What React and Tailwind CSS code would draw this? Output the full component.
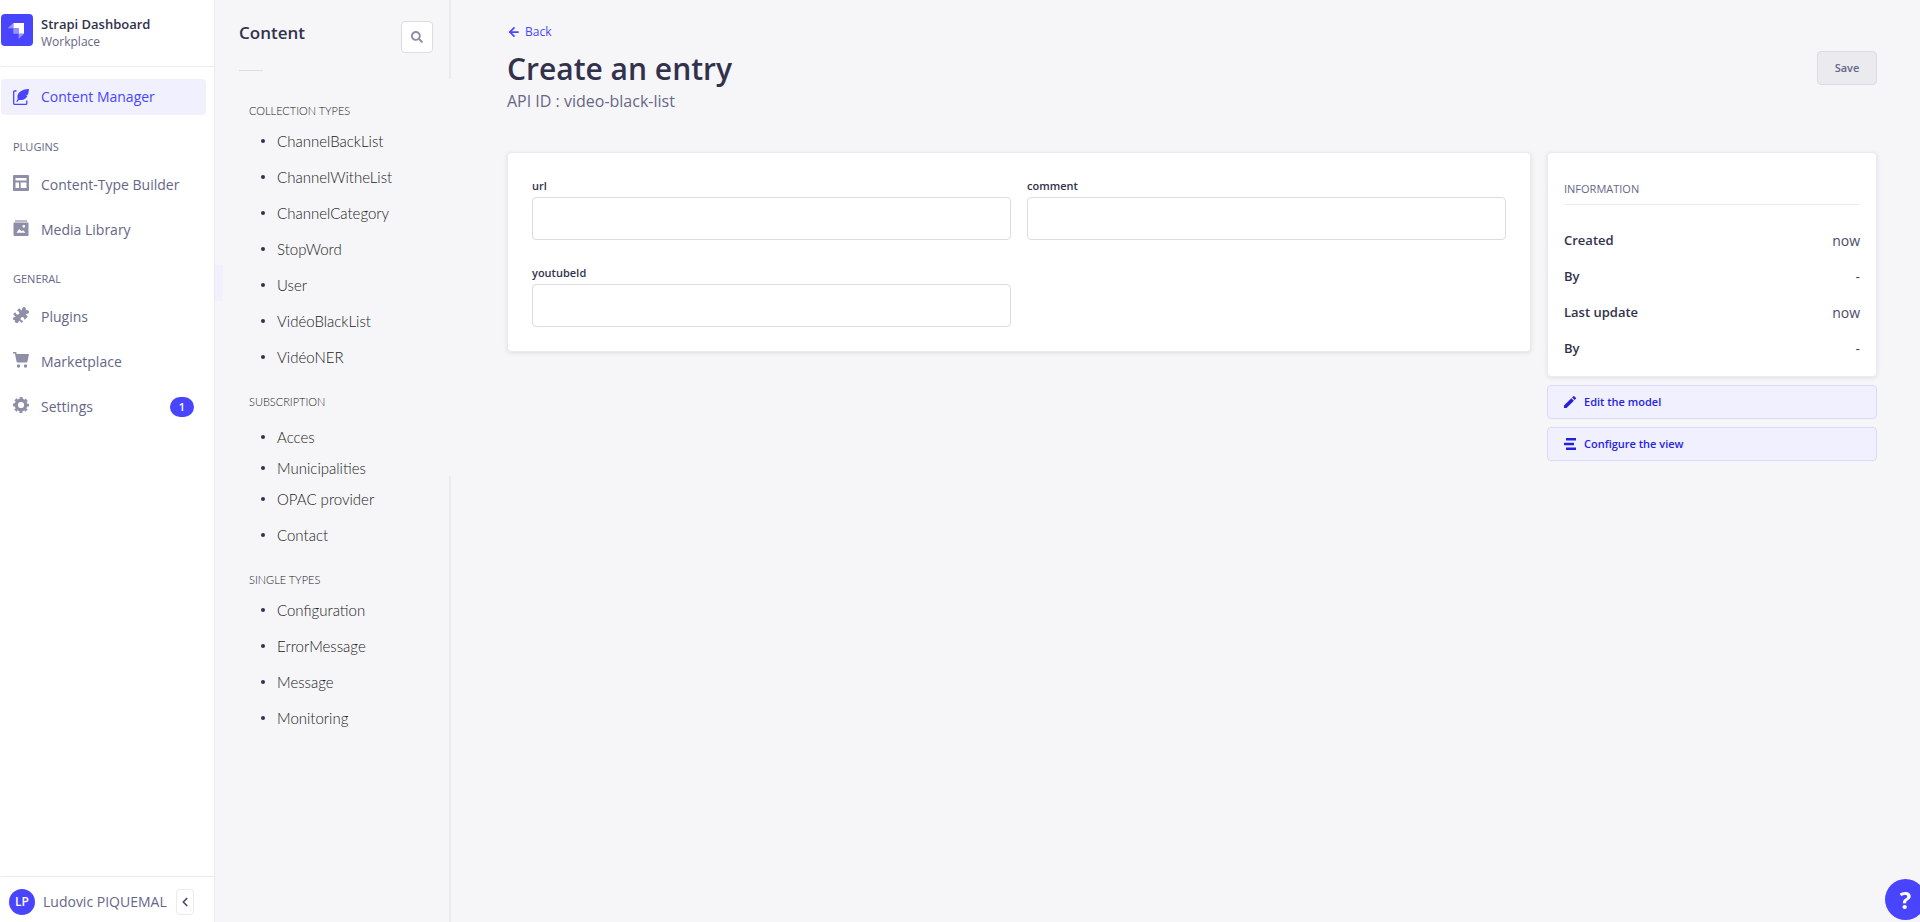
import { useState } from 'react';
import { FaSearch } from 'react-icons/fa';
import { MdEdit } from 'react-icons/md';
import { FiArrowLeft, FiChevronLeft } from 'react-icons/fi';

const StrapiLogo = () => (
  <svg viewBox="0 0 32 32" className="w-8 h-8 shrink-0" aria-hidden="true">
    <rect width="32" height="32" rx="4" fill="#4945ff" />
    <path d="M12.3 9H23v10.7h-5.4v-5a.5.5 0 0 0-.5-.5h-4.8z" fill="#fff" />
    <path d="M12.3 9v5.2H7.2a.2.2 0 0 1-.2-.4z" fill="#9593ff" />
    <path d="M12.3 14.2h4.8a.5.5 0 0 1 .5.5v5h-4.8a.5.5 0 0 1-.5-.5z" fill="#9593ff" />
    <path d="M17.6 19.7H23l-5 5a.2.2 0 0 1-.4-.2z" fill="#9593ff" />
  </svg>
);

const FeatherIcon = () => (
  <svg viewBox="0 0 16 16" className="w-4 h-4 shrink-0" aria-hidden="true">
    <path d="M3.500 2H1.300Q.7 2 .7 2.600v12q0 .7.7.7h11.800q.6 0 .6-.7v-3.200" fill="none" stroke="#4945ff" strokeWidth="1.300" />
    <path d="M16 0C12.500 0 7.500 1.200 5.300 4.600c-1.200 1.900-1 3.700-.6 5.400L3.200 12.700l1 .4 1.600-2.100c3 .4 5.700-.2 7.500-2.300.5-.6.8-1.200 1.100-1.900l-1.500-.1 2-1.100c.6-1.700.9-3.600 1.100-5.600z" fill="#4945ff" />
  </svg>
);

const LayoutIcon = () => (
  <svg viewBox="0 0 16 16" className="w-4 h-4 shrink-0" fill="#8e8ea9" aria-hidden="true">
    <path fillRule="evenodd" d="M1 0h14a1 1 0 0 1 1 1v14a1 1 0 0 1-1 1H1a1 1 0 0 1-1-1V1a1 1 0 0 1 1-1zm1.500 3v2.500h11V3zm0 4.500v5.500H6V7.500zm5.200 0v5.500h5.800V7.500z" />
  </svg>
);

const MediaIcon = () => (
  <svg viewBox="0 0 16 16" className="w-4 h-4 shrink-0" fill="#8e8ea9" aria-hidden="true">
    <path d="M2 0h12v2H2z" opacity=".6" />
    <path fillRule="evenodd" d="M1 2.500h14a.5.5 0 0 1 .5.5v12a1 1 0 0 1-1 1h-13a1 1 0 0 1-1-1V3a.5.5 0 0 1 .5-.5zM10.800 5a1.300 1.300 0 1 0 0 2.700 1.300 1.300 0 0 0 0-2.700zM3.500 12.800h9l-2.300-2.600-1.500 1L6.200 9z" />
  </svg>
);

const PuzzleIcon = () => (
  <svg viewBox="0 0 16 16" className="w-4 h-4 shrink-0" fill="#8e8ea9" aria-hidden="true">
    <path d="M6.200 1.200 8 3c.5.4 1 .2 1-.4C9 1 9.800 0 11 0s2 .9 1.800 2c-.1.800.2 1.100 1 1 1.200-.1 2.200.7 2.200 1.900s-1 2-2.500 2c-.7 0-.9.500-.4 1l1.700 1.800-2.600 2.600c-.4.400-1 .2-1-.4-.1-1.300-.8-2-1.800-2s-1.900.9-1.900 1.800c0 1.100.8 1.700 2 1.900.6.1.8.6.4 1l-1.300 1.300-2-1.900c-.5-.4-.9-.2-1 .4-.1 1-.8 1.600-1.900 1.600S1.700 15 1.900 14c.1-.7-.2-1-.9-.9-.6.100-1-.6-1-1.300 0-1 .6-1.700 1.600-1.800.6-.1.800-.5.400-1L.2 7.200 1.800 5.600c.4-.4.9-.2 1 .3.200 1.100.8 1.700 1.800 1.700S6.300 6.800 6.300 5.900 5.700 4.300 4.700 4.100c-.6-.1-.7-.6-.300-1z" />
  </svg>
);

const GearIcon = () => (
  <svg viewBox="0 0 16 16" className="w-4 h-4 shrink-0" fill="none" stroke="#8e8ea9" aria-hidden="true">
    <circle cx="8" cy="8" r="4.800" strokeWidth="3.400" />
    <circle cx="8" cy="8" r="7" strokeWidth="2" strokeDasharray="3 2.498" strokeDashoffset="1.500" />
  </svg>
);

const CartIcon = () => (
  <svg viewBox="0 0 16 16" className="w-4 h-4 shrink-0" fill="#8e8ea9" aria-hidden="true">
    <path d="M0 0h2.600q.6 0 .8.600L3.700 2H16l-1.500 7.600q-.2.900-1.100.9H4.600q-.8 0-1-.8L1.900 1.500H0z" />
    <circle cx="5.500" cy="14" r="1.700" />
    <circle cx="12.500" cy="14" r="1.700" />
  </svg>
);

const BarsIcon = () => (
  <svg viewBox="0 0 12 12" className="w-3 h-3 shrink-0" fill="#271fe0" aria-hidden="true">
    <path d="M2 0h10v2.400H2zM0 4.800h10v2.400H0zM2 9.600h10V12H2z" />
  </svg>
);

const pluginLinks = [
  { label: 'Content-Type Builder', icon: LayoutIcon },
  { label: 'Media Library', icon: MediaIcon },
];

const generalLinks = [
  { label: 'Plugins', icon: PuzzleIcon },
  { label: 'Marketplace', icon: CartIcon },
  { label: 'Settings', icon: GearIcon, badge: 1 },
];

const collectionTypes = ['ChannelBackList', 'ChannelWitheList', 'ChannelCategory', 'StopWord', 'User', 'VidéoBlackList', 'VidéoNER'];
const subscription = ['Acces', 'Municipalities', 'OPAC provider', 'Contact'];
const singleTypes = ['Configuration', 'ErrorMessage', 'Message', 'Monitoring'];

const information = [
  { label: 'Created', value: 'now' },
  { label: 'By', value: '-' },
  { label: 'Last update', value: 'now' },
  { label: 'By', value: '-' },
];

const NavLinks = ({ links }) => (
  <ul>
    {links.map(({ label, icon: Icon, badge }) => (
      <li key={label}>
        <a href="#" className="flex items-center h-[45px] pl-3 pr-5 gap-3 text-sm text-[#666687]">
          <span className="pb-1"><Icon /></span>
          <span>{label}</span>
          {badge && (
            <span className="ml-auto flex items-center justify-center w-6 h-5 rounded-full bg-[#4945ff] text-white text-[11px] font-semibold">
              {badge}
            </span>
          )}
        </a>
      </li>
    ))}
  </ul>
);

const TypeList = ({ title, items, className = '' }) => (
  <section className={className}>
    <h3 className="h-6 pl-[34px] text-[11px] leading-6 font-light uppercase">{title}</h3>
    <ul className={title === 'Subscription' ? 'mt-[5px]' : ''}>
      {items.map((item) => (
        <li key={item} className={item === 'Municipalities' ? 'h-[26px]' : 'h-9'}>
          <a href="#" className="flex items-center h-full pl-[46px] gap-3 text-[15px] font-light">
            <span className="w-1 h-1 rounded-full bg-[#32324d]" />
            {item}
          </a>
        </li>
      ))}
    </ul>
  </section>
);

const Field = ({ name, value, onChange }) => (
  <div className="flex flex-col gap-0.5">
    <label htmlFor={name} className="text-[11px] leading-[18px] font-semibold text-[#32324d]">{name}</label>
    <input
      id={name}
      type="text"
      value={value}
      onChange={(e) => onChange(name, e.target.value)}
      className="w-full h-[43px] px-4 bg-white border border-[#dcdce4] rounded text-sm text-[#32324d]"
    />
  </div>
);

const App = () => {
  const [entry, setEntry] = useState({ url: '', comment: '', youtubeId: '' });

  const handleChange = (name, value) => {
    setEntry((prev) => ({ ...prev, [name]: value }));
  };

  return (
    <div className="flex min-h-screen bg-[#f6f6f9] font-['Open_Sans',sans-serif] text-[#32324d] overflow-x-hidden">
      {/* Main navigation */}
      <nav className="flex flex-col w-[215px] shrink-0 pl-px bg-white border-r border-[#eaeaef]">
        <div className="flex items-center gap-2 h-[67px] pb-[6px] border-b border-[#eaeaef]">
          <StrapiLogo />
          <div className="pt-1">
            <p className="text-[13px] leading-5 font-semibold">Strapi Dashboard</p>
            <p className="text-xs leading-4 text-[#666687]">Workplace</p>
          </div>
        </div>

        <a href="#" className="flex items-center h-9 mt-3 mr-2 pl-3 gap-3 rounded bg-[#f0f0ff] text-sm text-[#4945ff]">
          <FeatherIcon />
          Content Manager
        </a>

        <h2 className="mt-6 mb-[7px] pl-3 text-[11px] leading-4 font-medium text-[#666687]">PLUGINS</h2>
        <NavLinks links={pluginLinks} />
        <h2 className="mt-[19px] mb-[7px] pl-3 text-[11px] leading-4 font-medium text-[#666687]">GENERAL</h2>
        <NavLinks links={generalLinks} />

        <div className="mt-auto flex items-center h-[46px] pl-2 pt-2 pb-1 border-t border-[#eaeaef]">
          <span className="flex items-center justify-center w-[26px] h-[26px] rounded-full bg-[#4945ff] text-white text-xs font-semibold">LP</span>
          <span className="ml-2 text-sm text-[#666687] whitespace-nowrap">Ludovic PIQUEMAL</span>
          <button aria-label="Collapse" className="ml-auto mr-5 flex items-center justify-center w-[18px] h-[26px] rounded border border-[#eaeaef] text-[#4a4a6a]">
            <FiChevronLeft size={14} strokeWidth={3} />
          </button>
        </div>
      </nav>

      {/* Content types */}
      <aside className="flex w-[236px] shrink-0">
        <div className="w-2 h-9 mt-[265px] bg-[#f0f0ff]" />
        <div className="flex-1">
          <div className="flex justify-between h-[99px] pl-4 pr-4">
            <div>
              <h2 className="mt-[19px] text-[17px] leading-7 font-semibold">Content</h2>
              <div className="w-6 h-px mt-[23px] bg-[#dcdce4]" />
            </div>
            <button aria-label="Search" className="flex items-center justify-center w-8 h-8 mt-[21px] bg-white border border-[#dcdce4] rounded text-[#8e8ea9]">
              <FaSearch size={12} />
            </button>
          </div>
          <div className="-ml-2 font-['Lato',sans-serif] text-[#212121]">
            <TypeList title="Collection types" items={collectionTypes} />
            <TypeList title="Subscription" items={subscription} className="mt-[15px]" />
            <TypeList title="Single types" items={singleTypes} className="mt-[15px]" />
          </div>
        </div>
        <div className="flex flex-col w-[2px]">
          <div className="h-[79px] bg-[#eaeaef]" />
          <div className="mt-[397px] flex-1 bg-[#eaeaef]" />
        </div>
      </aside>

      {/* Entry form */}
      <main className="flex-1 min-w-0 pl-14 pr-[43px] pt-6">
        <header className="flex items-start justify-between h-32">
          <div>
            <a href="#" className="flex items-center gap-1 text-xs leading-4 text-[#4945ff]">
              <FiArrowLeft size={14} strokeWidth={3} />
              Back
            </a>
            <h1 className="mt-[9px] text-3xl leading-10 font-semibold">Create an entry</h1>
            <p className="text-base leading-6 text-[#666687]">API ID : video-black-list</p>
          </div>
          <button disabled className="mt-[27px] w-[60px] h-[34px] rounded border border-[#dcdce4] bg-[#eaeaef] text-[11px] font-semibold text-[#666687]">
            Save
          </button>
        </header>

        <div className="flex items-start gap-4">
          <form className="flex-1 grid grid-cols-2 gap-x-4 gap-y-6 p-6 bg-white border border-[#eaeaef] rounded shadow-[0_1px_4px_rgba(33,33,52,0.1)]">
            <Field name="url" value={entry.url} onChange={handleChange} />
            <Field name="comment" value={entry.comment} onChange={handleChange} />
            <Field name="youtubeId" value={entry.youtubeId} onChange={handleChange} />
          </form>

          <div className="w-[330px] shrink-0">
            <div className="px-4 pt-6 pb-[9px] bg-white border border-[#eaeaef] rounded shadow-[0_1px_4px_rgba(33,33,52,0.1)]">
              <h2 className="pt-1 pb-[7px] mb-[18px] text-[11px] leading-4 font-medium text-[#666687] border-b border-[#eaeaef]">INFORMATION</h2>
              <dl>
                {information.map((row, index) => (
                  <div key={index} className="flex items-center justify-between h-9">
                    <dt className="text-[13px] font-semibold">{row.label}</dt>
                    <dd className="text-sm text-[#4a4a6a]">{row.value}</dd>
                  </div>
                ))}
              </dl>
            </div>
            <button className="flex items-center gap-2 w-full h-[34px] mt-2 px-4 rounded border border-[#d9d8ff] bg-[#f0f0ff] text-[11px] font-semibold text-[#271fe0]">
              <MdEdit className="w-4 h-4 -mx-0.5" />
              Edit the model
            </button>
            <button className="flex items-center gap-2 w-full h-[34px] mt-2 px-4 rounded border border-[#d9d8ff] bg-[#f0f0ff] text-[11px] font-semibold text-[#271fe0]">
              <BarsIcon />
              Configure the view
            </button>
          </div>
        </div>
      </main>

      <button aria-label="Help" className="fixed -right-[6px] bottom-[2px] flex items-center justify-center w-[41px] h-[41px] rounded-full bg-[#4945ff] text-white text-2xl font-bold">
        ?
      </button>
    </div>
  );
};

export default App;
